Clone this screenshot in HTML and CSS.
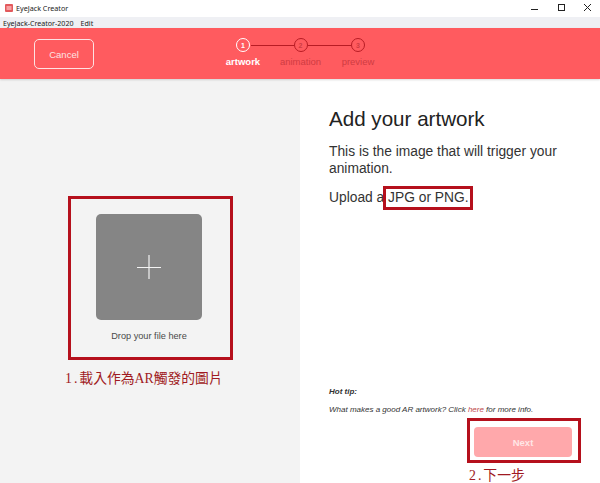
FILE: index.html
```html
<!DOCTYPE html>
<html lang="zh-Hant">
	<head>
		<meta charset="UTF-8" />
		<meta name="viewport" content="width=device-width, initial-scale=1.0" />
		<title>EyeJack Creator</title>
		<link rel="stylesheet" href="styles.css">
	</head>
	<body>
		<div class="titlebar">
			<div class="app-title">
				<svg class="app-icon" width="8" height="8" viewBox="0 0 8 8">
					<rect width="8" height="8" rx="1" fill="#e2595c" />
					<rect x="1.5" y="2" width="5" height="4" fill="#f7a1a3" />
				</svg>
				<span>EyeJack Creator</span>
			</div>
			<div class="window-buttons">
				<svg width="10" height="10" viewBox="0 0 10 10"><path d="M0 6.5H7" stroke="#222" stroke-width="1" fill="none" /></svg>
				<svg width="10" height="10" viewBox="0 0 10 10"><rect x="1.5" y="1.5" width="6" height="6" stroke="#222" stroke-width="1" fill="none" /></svg>
				<svg width="10" height="10" viewBox="0 0 10 10"><path d="M1 1L8 8M8 1L1 8" stroke="#222" stroke-width="1" fill="none" /></svg>
			</div>
		</div>
		<div class="menubar">
			<span>EyeJack-Creator-2020</span>
			<span>Edit</span>
		</div>

		<header class="app-header">
			<button class="cancel-btn">Cancel</button>
			<div class="steps">
				<div class="step active">
					<div class="step-num">1</div>
					<div class="step-label">artwork</div>
				</div>
				<div class="step">
					<div class="step-num">2</div>
					<div class="step-label">animation</div>
				</div>
				<div class="step">
					<div class="step-num">3</div>
					<div class="step-label">preview</div>
				</div>
			</div>
		</header>

		<main class="content">
			<section class="left-pane">
				<div class="dropzone">
					<svg width="24" height="24" viewBox="0 0 24 24">
						<path d="M12 0V24" stroke="#dcdcdc" stroke-width="1.5" fill="none" />
						<path d="M0 12.5H24" stroke="#f4f4f4" stroke-width="1" fill="none" />
					</svg>
				</div>
				<p class="drop-text">Drop your file here</p>
			</section>
			<section class="right-pane">
				<h1>Add your artwork</h1>
				<p class="lead">This is the image that will trigger your animation.</p>
				<p class="lead">Upload a JPG or PNG.</p>
				<div class="tip">
					<p class="tip-title">Hot tip:</p>
					<p class="tip-text">What makes a good AR artwork? Click <a href="#">here</a> for more info.</p>
				</div>
				<div class="actions">
					<button class="next-btn">Next</button>
				</div>
			</section>
		</main>

		<!-- annotations drawn over the screenshot -->
		<div class="mark mark-drop"></div>
		<div class="mark mark-format"></div>
		<div class="mark mark-next"></div>
		<div class="note note-drop"><span class="note-num">1.</span>載入作為AR觸發的圖片</div>
		<div class="note note-next"><span class="note-num">2.</span>下一步</div>
	</body>
</html>
```

FILE: styles.css
```css
html,
body {
	height: 483px;
}
body {
	margin: 0;
	position: relative;
	overflow: hidden;
	display: flex;
	flex-direction: column;
	font-family: 'Liberation Sans', Arial, sans-serif;
	background-color: #fff;
}
.titlebar {
	height: 16px;
	flex: none;
	display: flex;
	justify-content: space-between;
	align-items: center;
	padding: 0 7px 1px 5px;
	background: #fff;
}
.app-title {
	display: flex;
	align-items: center;
	gap: 3px;
	font-family: 'Noto Sans', sans-serif;
	font-size: 7.2px;
	color: #222;
}
.window-buttons {
	display: flex;
	gap: 16px;
}
.menubar {
	height: 11px;
	flex: none;
	display: flex;
	align-items: center;
	gap: 7px;
	padding: 0 3px;
	background-color: #eff0f4;
	font-family: 'Noto Sans', sans-serif;
	font-size: 7.1px;
	color: #222;
}
.app-header {
	height: 51px;
	flex: none;
	position: relative;
	display: flex;
	justify-content: center;
	align-items: flex-start;
	background-color: #ff5b5f;
	box-shadow: 0 1px 2px rgba(0, 0, 0, 0.15);
}
.cancel-btn {
	position: absolute;
	left: 34px;
	top: 11px;
	width: 60px;
	height: 30px;
	padding: 0;
	background: transparent;
	border: 1.5px solid #fde3e3;
	border-radius: 5px;
	color: #fde3e3;
	font-family: inherit;
	font-size: 9.5px;
}
.steps {
	display: flex;
	padding-top: 10px;
	margin-left: 1px;
}
.step {
	position: relative;
	width: 57.5px;
	display: flex;
	flex-direction: column;
	align-items: center;
	color: #cf3c42;
}
.step + .step::before {
	content: '';
	position: absolute;
	top: 6.5px;
	left: -21px;
	width: 43px;
	height: 1px;
	background-color: #b81c24;
}
.step-num {
	box-sizing: border-box;
	width: 14px;
	height: 14px;
	border: 1px solid #b81c24;
	border-radius: 50%;
	display: flex;
	align-items: center;
	justify-content: center;
	font-size: 7px;
	font-weight: bold;
}
.step-label {
	margin-top: 4px;
	font-size: 9.5px;
}
.step.active {
	color: #fff;
}
.step.active .step-num {
	border: 1.5px solid #fff;
}
.step.active .step-label {
	font-weight: bold;
}
.content {
	flex: 1;
	display: flex;
}
.left-pane {
	width: 300px;
	display: flex;
	flex-direction: column;
	align-items: center;
	padding: 135px 2px 0 0;
	box-sizing: border-box;
	background-color: #f3f3f3;
}
.dropzone {
	width: 106px;
	height: 106px;
	display: flex;
	align-items: center;
	justify-content: center;
	background-color: #858585;
	border-radius: 5px;
}
.drop-text {
	margin: 11px 0 0;
	font-size: 9.2px;
	color: #4a4a4a;
}
.right-pane {
	flex: 1;
	display: flex;
	flex-direction: column;
	padding: 28px 28px 26px 29px;
}
h1 {
	margin: 0 0 12px;
	font-size: 20.6px;
	font-weight: normal;
	line-height: 24px;
	color: #222;
}
.lead {
	margin: 0 0 12px;
	font-size: 13.8px;
	line-height: 17px;
	color: #333;
}
.tip {
	margin-top: auto;
	font-size: 8px;
	font-style: italic;
	color: #333;
}
.tip-title {
	margin: 0 0 9px;
	font-weight: bold;
}
.tip-text {
	margin: 0;
}
.tip-text a {
	color: #c04a4e;
	text-decoration: none;
}
.actions {
	display: flex;
	justify-content: flex-end;
	margin-top: 13px;
}
.next-btn {
	width: 98px;
	height: 30px;
	padding: 0;
	background-color: #ffa8ab;
	border: none;
	border-radius: 4px;
	color: #ffe6e6;
	font-family: inherit;
	font-size: 9.5px;
	font-weight: bold;
}
.mark {
	position: absolute;
	box-sizing: border-box;
	border: 3px solid #b5101c;
}
.mark-drop {
	left: 68px;
	top: 196px;
	width: 165px;
	height: 164px;
}
.mark-format {
	left: 383px;
	top: 186px;
	width: 90px;
	height: 24px;
}
.mark-next {
	left: 467px;
	top: 418px;
	width: 114px;
	height: 45px;
}
.note {
	position: absolute;
	font-family: 'Liberation Serif', 'Noto Sans CJK TC', serif;
	font-size: 13.8px;
	line-height: 16px;
	color: #a01a22;
	white-space: nowrap;
}
.note-num {
	letter-spacing: 2px;
}
.note-drop {
	left: 65px;
	top: 371px;
}
.note-next {
	left: 469px;
	top: 468px;
}
```
